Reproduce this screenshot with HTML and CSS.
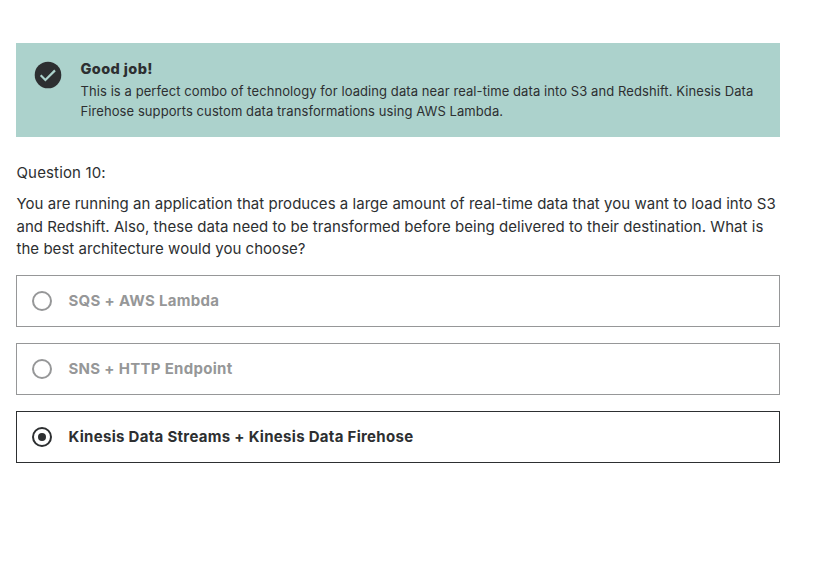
FILE: index.html
```html
<!DOCTYPE html>
<html lang="en">
<head>
<meta charset="utf-8">
<title>Quiz</title>
<link rel="stylesheet" href="styles.css">
</head>
<body>
<main class="quiz">
  <section class="alert">
    <svg class="alert-icon" viewBox="0 0 32 32"><circle cx="16" cy="16" r="13.3" fill="#2d2f31"/><path d="M8.7 16.3l4.7 4.7 9.6-9.6" fill="none" stroke="#acd2cc" stroke-width="2.2"/></svg>
    <div class="alert-body">
      <h2 class="alert-title">Good job!</h2>
      <p class="alert-text">This is a perfect combo of technology for loading data near real-time data into S3 and Redshift. Kinesis Data<br>Firehose supports custom data transformations using AWS Lambda.</p>
    </div>
  </section>
  <div class="label">Question 10:</div>
  <p class="question">You are running an application that produces a large amount of real-time data that you want to load into S3<br>and Redshift. Also, these data need to be transformed before being delivered to their destination. What is<br>the best architecture would you choose?</p>
  <div class="answers">
    <div class="answer"><span class="radio"></span><span class="answer-text">SQS + AWS Lambda</span></div>
    <div class="answer"><span class="radio"></span><span class="answer-text">SNS + HTTP Endpoint</span></div>
    <div class="answer selected"><span class="radio"></span><span class="answer-text">Kinesis Data Streams + Kinesis Data Firehose</span></div>
  </div>
</main>
</body>
</html>
```
FILE: styles.css
```css
* { box-sizing: border-box; }
body { margin: 0; background: #fff; color: #2d2f31; font-family: Inter, "Liberation Sans", sans-serif; white-space: nowrap; }
h2, p { margin: 0; }
.quiz { width: 780px; padding: 43px 0 0 16px; }
.alert { display: flex; height: 94px; padding: 16px; gap: 16.5px; background: #acd2cc; }
.alert-icon { width: 32px; height: 32px; flex: none; }
.alert-title { font-size: 14.5px; line-height: 20px; font-weight: 800; letter-spacing: 0.4px; }
.alert-text { font-size: 13px; line-height: 20px; margin-top: 2px; letter-spacing: 0.08px; }
.label { margin-top: 24px; padding-left: 0.5px; font-size: 15px; line-height: 23px; letter-spacing: 0.15px; }
.question { margin-top: 9px; padding-left: 0.5px; font-size: 15px; line-height: 22.5px; letter-spacing: 0.035px; }
.answers { display: grid; gap: 16px; margin-top: 14.5px; }
.answer { display: flex; align-items: center; height: 52px; padding-left: 15px; gap: 16.5px; border: 1px solid #969798; color: #969798; font-size: 15px; font-weight: 700; letter-spacing: 0.3px; }
.answer-text { line-height: 22px; padding-bottom: 1px; }
.radio { display: flex; width: 20px; height: 20px; border: 2px solid currentColor; border-radius: 50%; }
.selected { border-color: #2d2f31; color: #2d2f31; }
.selected .radio::after { content: ""; width: 8px; height: 8px; margin: auto; border-radius: 50%; background: currentColor; }
```
